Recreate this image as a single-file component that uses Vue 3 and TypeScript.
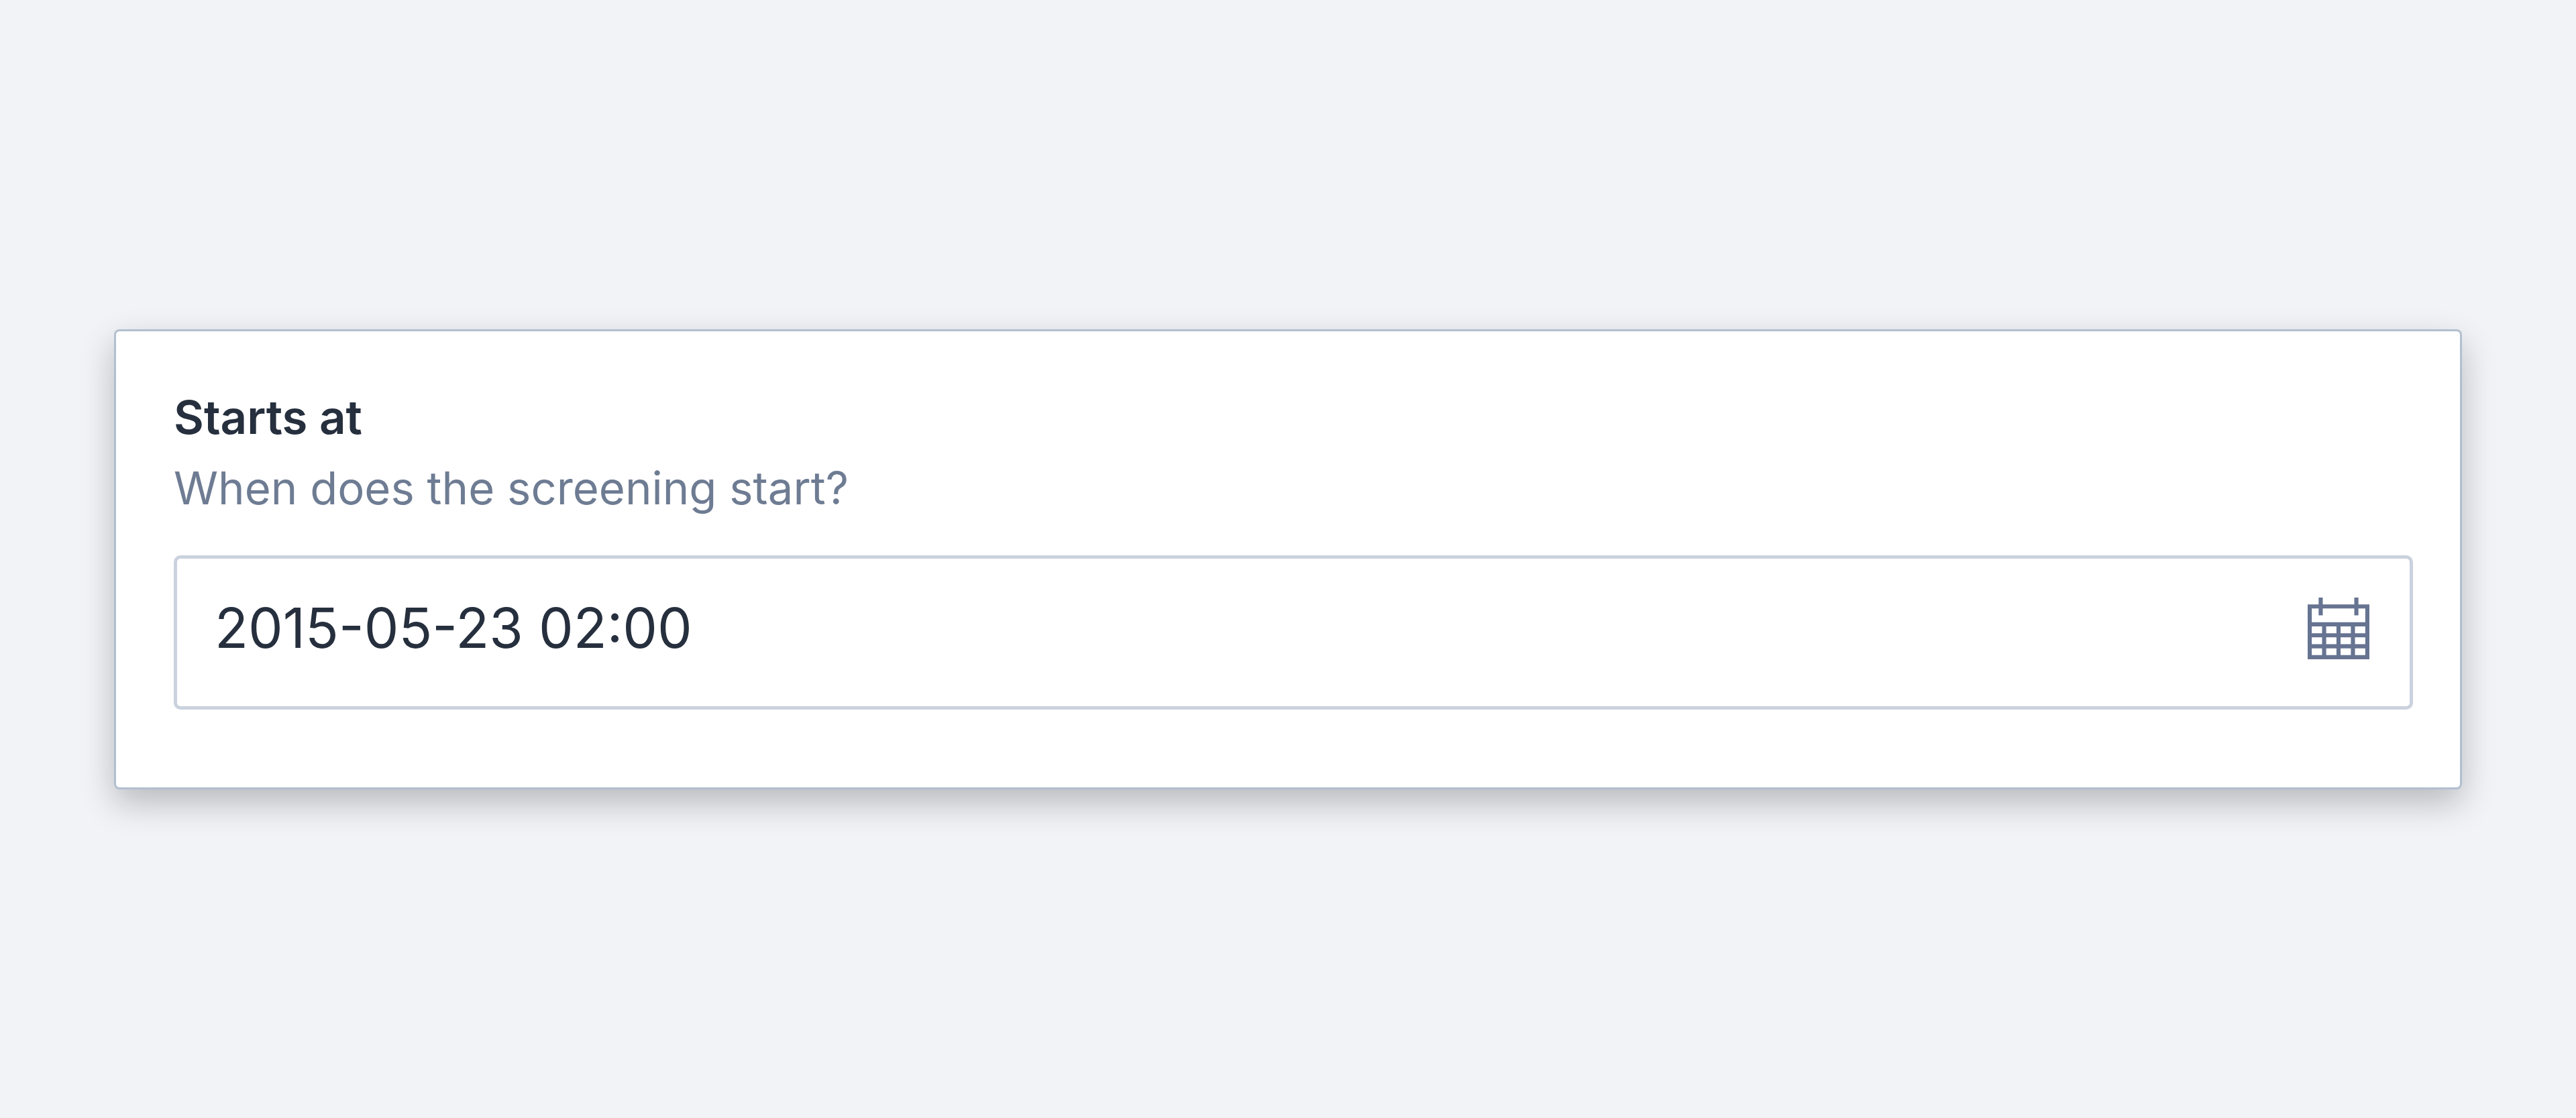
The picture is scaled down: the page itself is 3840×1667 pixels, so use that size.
<script setup lang="ts">
import { ref } from 'vue'

const startsAt = ref<string>('2015-05-23 02:00')
</script>

<template>
  <main class="page">
    <section class="card">
      <label class="title" for="starts-at">Starts at</label>
      <p id="starts-at-description" class="description">When does the screening start?</p>
      <div class="field">
        <input
          id="starts-at"
          v-model="startsAt"
          class="input"
          type="text"
          aria-describedby="starts-at-description"
        />
        <button class="picker" type="button" aria-label="Select date">
          <svg class="icon" viewBox="0 0 90 90" fill="none" stroke="currentColor" aria-hidden="true">
            <path stroke-width="6" d="M3 13H87V87H3ZM3 39H87" />
            <path stroke-width="6" d="M3 55H87M3 71H87M24 39V87M45 39V87M66 39V87" />
            <path stroke-width="6" d="M19 0V26M71 0V26" />
          </svg>
        </button>
      </div>
    </section>
  </main>
</template>

<style>
body {
  margin: 0;
  background: #f1f3f7;
}
</style>

<style scoped>
.page {
  box-sizing: border-box;
  min-height: 100vh;
  padding: 80px 170px;
  display: flex;
  align-items: center;
  font-family: Inter, "Liberation Sans", sans-serif;
  background: #f1f3f7;
}

.card {
  flex: 1;
  min-width: 0;
  padding: 76px 70px 116px 86px;
  border: 3px solid #b2bfd0;
  border-radius: 8px;
  background: #fff;
  box-shadow: 0 20px 50px rgba(0, 0, 0, 0.24);
}

.title,
.description {
  display: block;
  margin: 0;
  line-height: 105px;
}

.title {
  font-size: 69px;
  font-weight: 600;
  color: #262f3d;
}

.description {
  font-size: 67px;
  color: #6e7c93;
}

.field {
  display: flex;
  align-items: center;
  margin-top: 48px;
  padding: 54px 60px 66px 56px;
  border: 5px solid #cad2de;
  border-radius: 10px;
}

.input {
  flex: 1;
  min-width: 0;
  height: 100px;
  padding: 0;
  border: 0;
  outline: 0;
  background: transparent;
  font: inherit;
  font-size: 82px;
  color: #262f3d;
}

.picker {
  display: flex;
  padding: 0;
  border: 0;
  background: transparent;
  color: #667391;
  cursor: pointer;
}

.icon {
  width: 92px;
  height: 92px;
}
</style>
